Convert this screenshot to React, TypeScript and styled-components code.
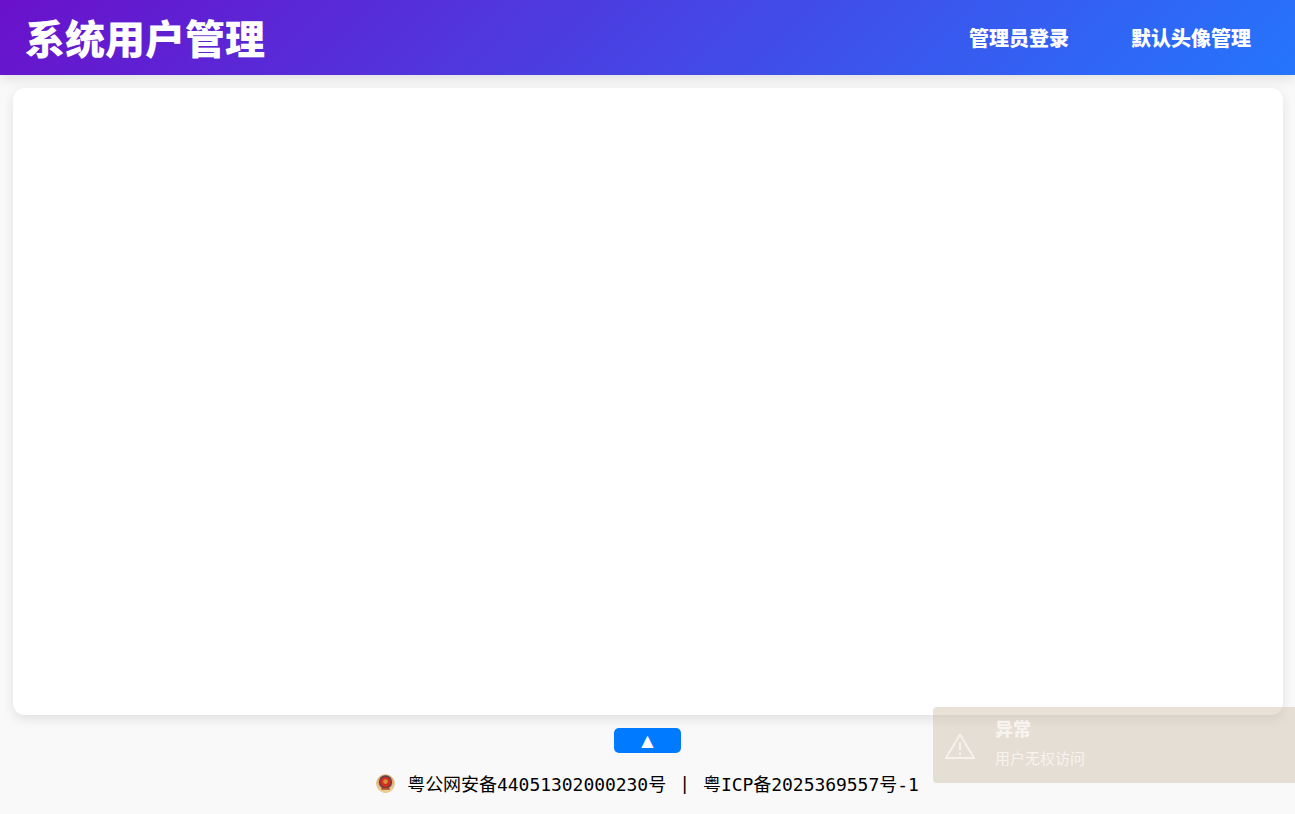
import React from "react";
import styled, { createGlobalStyle } from "styled-components";

const GlobalStyle = createGlobalStyle`
  html, body {
    margin: 0;
    padding: 0;
    height: 100%;
    background: #f9f9f9;
    overflow: hidden;
    font-family: "Inter", "Noto Sans CJK SC", sans-serif;
  }
  #root {
    height: 100%;
  }
`;

const Emblem: React.FC = () => (
  <svg width="19" height="19" viewBox="0 0 18 18">
    <circle cx="9" cy="9" r="8.8" fill="#dfb473" />
    <path d="M0.6 8 C1 14 5 17.8 9 18 C13 17.8 17 14 17.4 8 L14 13.5 L4 13.5 Z" fill="#eccd90" />
    <circle cx="9" cy="7.6" r="6.3" fill="#57404f" />
    <circle cx="9" cy="7.6" r="5" fill="#d42c1e" />
    <circle cx="9" cy="7.2" r="2.2" fill="#d8913c" />
    <rect x="5" y="13.2" width="8" height="1.8" fill="#b8502e" />
  </svg>
);

const WarningIcon: React.FC = () => (
  <svg width="32" height="28" viewBox="0 0 32 28" fill="none" stroke="#f5f1eb" strokeWidth="2" strokeLinejoin="round">
    <path d="M16 2.5 L30 26 L2 26 Z" />
    <path d="M16 10.5 V18" />
    <path d="M16 20.5 V23" />
  </svg>
);

const App: React.FC = () => (
  <Page>
    <GlobalStyle />
    <Header>
      <Title>系统用户管理</Title>
      <Nav>
        <NavLink>管理员登录</NavLink>
        <NavLink>默认头像管理</NavLink>
      </Nav>
    </Header>
    <Main>
      <Card />
    </Main>
    <Footer>
      <ToggleButton>▲</ToggleButton>
      <Filing>
        <Emblem />
        <FilingText>粤公网安备44051302000230号</FilingText>
        <Divider>|</Divider>
        <FilingText>粤ICP备2025369557号-1</FilingText>
      </Filing>
    </Footer>
    <Toast>
      <ToastIcon>
        <WarningIcon />
      </ToastIcon>
      <ToastBody>
        <ToastTitle>异常</ToastTitle>
        <ToastMessage>用户无权访问</ToastMessage>
      </ToastBody>
    </Toast>
  </Page>
);

export default App;

const Page = styled.div`
  height: 814px;
  display: flex;
  flex-direction: column;
  background: #f9f9f9;
  position: relative;
  overflow: hidden;
`;

const Header = styled.header`
  flex: 0 0 75px;
  box-sizing: border-box;
  display: flex;
  align-items: center;
  justify-content: space-between;
  padding: 0 44px 0 25px;
  background: linear-gradient(135deg, #6a11cb, #2575fc);
  box-shadow: 0 4px 12px rgba(0, 0, 0, 0.1);
  color: #fff;
`;

const Title = styled.h1`
  margin: 4px 0 0;
  font-size: 40px;
  font-weight: 900;
  line-height: 1;
`;

const Nav = styled.nav`
  display: flex;
  gap: 62px;
  margin-top: 2px;
`;

const NavLink = styled.a`
  font-size: 20px;
  font-weight: 900;
  line-height: 1.2;
  color: #fff;
  cursor: pointer;
`;

const Main = styled.main`
  padding: 13px 12px 0 13px;
`;

const Card = styled.section`
  height: 627px;
  background: #fff;
  border-radius: 12px;
  box-shadow: 0 4px 12px rgba(0, 0, 0, 0.1);
`;

const Footer = styled.footer`
  display: flex;
  flex-direction: column;
  align-items: center;
  padding-top: 13px;
`;

const ToggleButton = styled.button`
  width: 67px;
  height: 25px;
  padding: 0;
  border: none;
  border-radius: 5px;
  background: #007bff;
  color: #fff;
  font-size: 16px;
  line-height: 25px;
  font-family: "DejaVu Sans", sans-serif;
  cursor: pointer;
`;

const Filing = styled.div`
  display: flex;
  align-items: center;
  height: 24px;
  margin-top: 18px;
  font-family: "DejaVu Sans Mono", "Noto Sans CJK SC", monospace;
  font-size: 18px;
  letter-spacing: -0.04px;
  color: #000;
`;

const FilingText = styled.span`
  white-space: nowrap;
  &:first-of-type {
    margin-left: 12px;
  }
`;

const Divider = styled.span`
  margin: 0 13px;
`;

const Toast = styled.div`
  position: absolute;
  left: 933px;
  top: 707px;
  width: 380px;
  height: 76px;
  box-sizing: border-box;
  display: flex;
  align-items: center;
  padding-left: 11px;
  border-radius: 4px;
  background: rgba(204, 190, 170, 0.46);
  color: #f7f3ee;
`;

const ToastIcon = styled.div`
  display: flex;
  width: 51px;
  margin-top: 2px;
`;

const ToastBody = styled.div`
  display: flex;
  flex-direction: column;
  margin-top: -3px;
`;

const ToastTitle = styled.div`
  font-size: 18px;
  font-weight: 900;
  line-height: 24px;
`;

const ToastMessage = styled.div`
  margin-top: 7px;
  font-size: 15px;
  line-height: 20px;
`;
